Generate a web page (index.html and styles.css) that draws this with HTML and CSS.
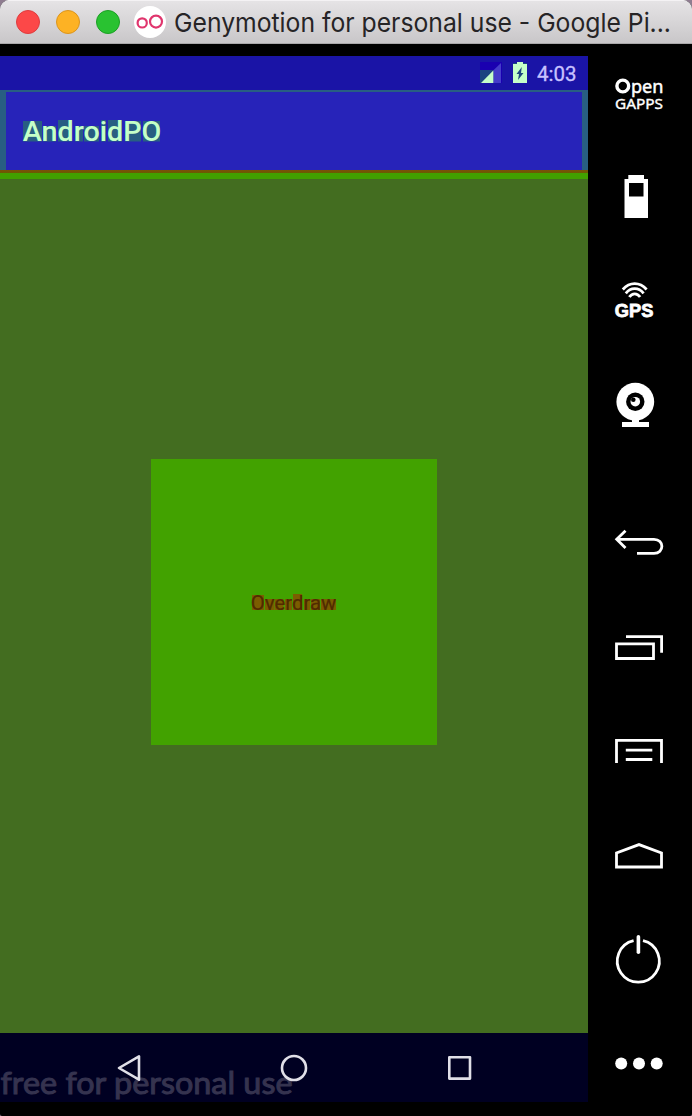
FILE: index.html
```html
<!DOCTYPE html>
<html lang="en">
<head>
<meta charset="utf-8">
<title>Genymotion</title>
<link rel="stylesheet" href="styles.css">
</head>
<body>
<div class="window">
  <header class="titlebar">
    <span class="light light-close"></span>
    <span class="light light-min"></span>
    <span class="light light-zoom"></span>
    <svg class="logo" width="32" height="32" viewBox="0 0 32 32"><circle cx="16" cy="16" r="16" fill="#fff"/><g fill="none" stroke="#e0366e" stroke-width="2.2"><circle cx="8.2" cy="16.9" r="4.6"/><circle cx="22" cy="15.6" r="6"/></g></svg>
    <svg class="caption" width="516" height="44"><text x="0" y="32" textLength="497" lengthAdjust="spacingAndGlyphs">Genymotion for personal use - Google Pi...</text></svg>
  </header>
  <div class="body">
    <main class="device">
      <div class="statusbar">
        <svg class="signal" width="22" height="21" viewBox="0 0 22 21"><path fill="#1a00b0" d="M0 0h22v21H0z"/><path fill="#453cca" d="M0 21L21 1v20z"/><path fill="#1c4580" d="M0 8h13.3v13H0z"/><path fill="#c5ffc8" d="M1 21L13.3 8.500V21z"/></svg>
        <svg class="battery" width="14" height="22" viewBox="0 0 14 22"><path fill="#1c4580" d="M0 1h14v20H0z"/><path fill="#c5ffc8" d="M4 0h6v2h4v19H0V2h4z"/><path fill="#1c4580" d="M8.800 5L3.500 12H6l-1 6 5.500-7H8z"/></svg>
        <svg class="clock" width="51" height="34"><text x="0" y="25" textLength="39.500" lengthAdjust="spacingAndGlyphs">4:03</text></svg>
      </div>
      <div class="appbar">
        <svg class="app-title" width="300" height="78" viewBox="0 92 300 78">
          <path class="glyph-box" d="M23 121h19v20.500H23zM43 126h13v15.500H43zM58 120h14v21.500H58zM75 126h8v15.500h-8zM84 126h15v15.500H84zM101 120h5v21.500h-5zM108 120h14v21.500h-14zM125 121h16v20.500h-16zM143 121h17v20.500h-17z"/>
          <text x="22.800" y="141" textLength="138.500" lengthAdjust="spacingAndGlyphs">AndroidPO</text>
        </svg>
      </div>
      <div class="shadow-dark"></div>
      <div class="shadow-light"></div>
      <section class="content">
        <div class="card">
          <svg width="90" height="30" viewBox="249 587 90 30">
            <path class="word-box" d="M252 595h12v15h-12zM265 599h9v11h-9zM274.500 599h9v11h-9zM285 599h7v11h-7zM293 594h9v16h-9zM304 599h6v11h-6zM311 599h9v11h-9zM321 599h15v11h-15z"/>
            <text x="250.800" y="610" textLength="85.500" lengthAdjust="spacingAndGlyphs">Overdraw</text>
          </svg>
        </div>
      </section>
      <nav class="navbar">
        <svg width="588" height="69" viewBox="0 1033 588 69">
          <text class="watermark" x="0.500" y="1093.500" textLength="292" lengthAdjust="spacingAndGlyphs">free for personal use</text>
          <g fill="none" stroke="#e0dfe8" stroke-width="2.600" stroke-linejoin="round"><path d="M119 1068L139 1056.300V1079.700z"/><circle cx="294" cy="1068" r="12"/><rect x="449.300" y="1057.300" width="20.700" height="21.300"/></g>
        </svg>
      </nav>
    </main>
    <aside class="tools">
      <svg class="tool" viewBox="0 0 104 104"><circle cx="34.800" cy="42" r="5.900" fill="none" stroke="#fff" stroke-width="3.400"/><g fill="#fff"><text class="open" x="43" y="49" textLength="32.500" lengthAdjust="spacingAndGlyphs">pen</text><text class="gapps" x="27" y="65.300" textLength="48" lengthAdjust="spacingAndGlyphs">GAPPS</text></g></svg>
      <svg class="tool" viewBox="0 0 104 104"><path fill="#fff" fill-rule="evenodd" d="M40.300 27H56v4h4v39H36.500V31h3.800zM41 35v13.500h14.500V35z"/></svg>
      <svg class="tool" viewBox="0 0 104 104"><g fill="none" stroke="#fff" stroke-width="2.800"><path d="M34.800 37.500Q40 31.700 46.700 31.700T58.600 37.500M37.800 41.300Q41.500 36.600 46.700 36.600T55.600 41.300M41.300 45Q43.500 41.800 46.700 41.800T52.100 45"/></g><text class="gps" x="26.800" y="64.700" textLength="38.500" lengthAdjust="spacingAndGlyphs">GPS</text></svg>
      <svg class="tool" viewBox="0 0 104 104"><g fill="#fff"><circle cx="47.300" cy="45.700" r="18.900"/><path d="M44 63h7v3h10v5H34v-5h10z"/></g><circle cx="47.300" cy="45.700" r="9.200"/><circle cx="47.300" cy="45.700" r="4.800" fill="#fff"/><circle cx="45.300" cy="43.700" r="2.300"/></svg>
      <svg class="tool group" viewBox="0 0 104 104"><path class="line" d="M37.500 39.700L28.700 48.300L37.500 57M28.700 48.300H66C76.500 48.300 76.500 62.400 66 62.400H49"/></svg>
      <svg class="tool" viewBox="0 0 104 104"><path class="line" d="M38 41.700H73.600V57.700M28.500 48.800H65.500V63.500H28.500z"/></svg>
      <svg class="tool" viewBox="0 0 104 104"><path class="line" d="M28.500 64V41.300H73.500V64M37.800 51.200H64.300M37.800 60.500H64.300"/></svg>
      <svg class="tool" viewBox="0 0 104 104"><path class="line" d="M28.500 64V49.900L51 41.600L73.500 49.900V64z"/></svg>
      <svg class="tool" viewBox="0 0 104 104"><path class="line" d="M45.600 33.700A21 21 0 1 0 55 33.700"/><path class="line power" d="M50.400 29.700V45.300"/></svg>
      <svg class="tool" viewBox="0 0 104 104"><g fill="#fff"><circle cx="33.200" cy="52.400" r="6"/><circle cx="51" cy="52.400" r="6"/><circle cx="68.700" cy="52.400" r="6"/></g></svg>
    </aside>
  </div>
</div>
</body>
</html>
```
FILE: styles.css
```css
body { margin: 0; background: #8f7c90; }
svg { display: block; flex: none; }
.window { width: 692px; height: 1116px; overflow: hidden; border-radius: 9px 9px 2px 2px; background: #000; }
.titlebar { display: flex; align-items: center; height: 44px; box-sizing: border-box; padding-left: 16px; background: linear-gradient(#e6e4e6, #c9c7c9 97%, #aaa8aa 98%); box-shadow: inset 0 1px #f4f2f4; }
.light { width: 24px; height: 24px; box-sizing: border-box; border-radius: 50%; margin-right: 16px; }
.light-close { background: #fc4848; border: 1px solid #df3c3e; }
.light-min { background: #fdb224; border: 1px solid #dc951c; }
.light-zoom { background: #29c231; border: 1px solid #1ba024; margin-right: 14px; }
.logo { margin-right: 8px; }
.caption { overflow: visible; }
.caption text { font: 26px Inter, "Liberation Sans", sans-serif; fill: #262426; }
.body { display: flex; height: 1072px; }
.device { width: 588px; padding-top: 12px; }
.statusbar { display: flex; height: 34px; background: #1a14a6; }
.signal { margin: 6px 11px 0 auto; }
.battery { margin: 6px 10px 0 0; }
.clock text { font: 20px Roboto, sans-serif; fill: #c8c2ff; stroke: #c8c2ff; stroke-width: 0.3; }
.appbar { height: 80px; box-sizing: border-box; border: solid #285e82; border-width: 2px 6px 0; background: #2723b9; }
.app-title { margin-left: -6px; }
.app-title text { font: 500 27.5px Roboto, sans-serif; fill: #c5ffc8; }
.glyph-box { fill: #285e82; }
.shadow-dark { height: 3px; background: linear-gradient(#7a5208, #6b5b00); }
.shadow-light { height: 6px; background: #42a000; }
.content { display: flex; height: 854px; background: #436d20; }
.card { display: flex; align-items: center; justify-content: center; width: 286px; height: 286px; margin: 280px 0 0 151px; background: #42a200; }
.card text { font: 20px Roboto, sans-serif; fill: #502b00; stroke: #502b00; stroke-width: 0.2; }
.word-box { fill: #7b5d00; }
.navbar { height: 69px; background: #000022; }
.watermark { font: 400 31px Lato, sans-serif; fill: #35334f; stroke: #35334f; stroke-width: 1; }
.tools { width: 104px; }
.tool { width: 104px; height: 104px; }
.group { margin-top: 31px; }
.line { fill: none; stroke: #fff; stroke-width: 2.8; }
.power { stroke-width: 3.6; stroke-linecap: round; }
.open { font: 400 18px "Noto Sans", sans-serif; stroke: #fff; stroke-width: 0.5; }
.gapps { font: 15px "Noto Sans", sans-serif; stroke: #fff; stroke-width: 0.4; }
.gps { font: 700 18px "Liberation Sans", sans-serif; fill: #fff; stroke: #fff; stroke-width: 0.8; }
```
